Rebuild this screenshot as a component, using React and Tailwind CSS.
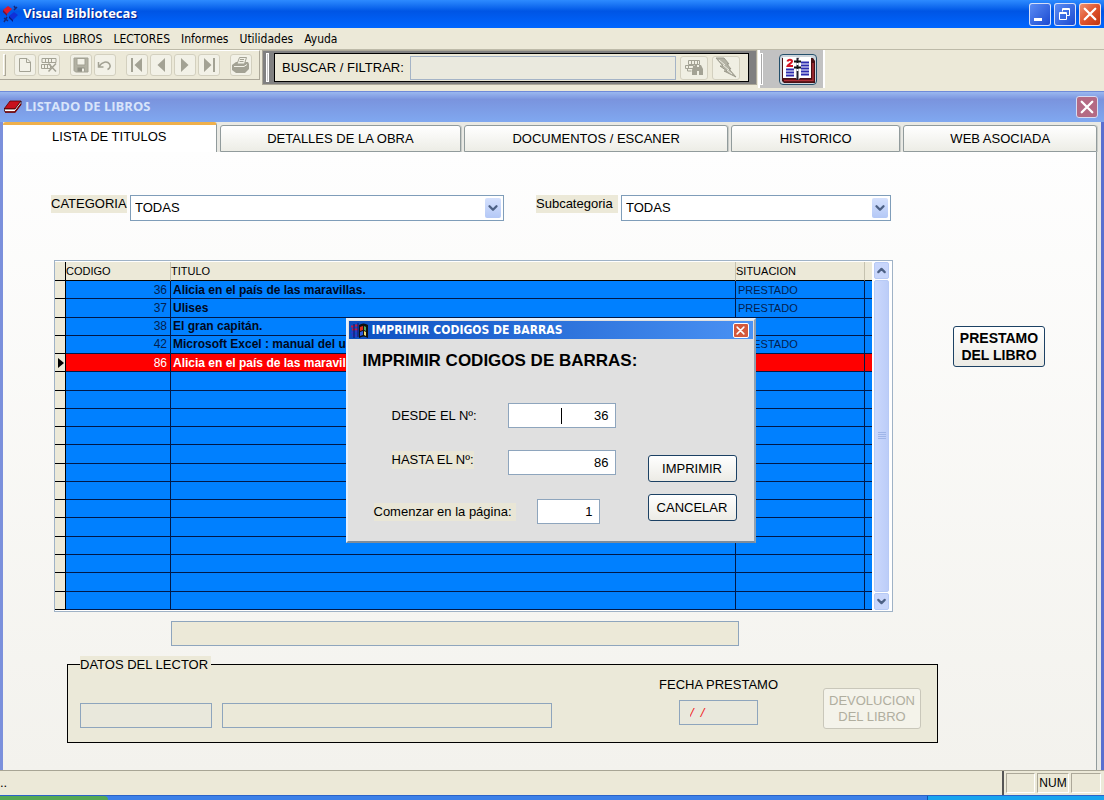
import { ChevronDown, ChevronUp } from 'lucide-react';

const MENUS = ['Archivos', 'LIBROS', 'LECTORES', 'Informes', 'Utilidades', 'Ayuda'];

const BOOKS = [
  { code: 36, title: 'Alicia en el país de las maravillas.', status: 'PRESTADO' },
  { code: 37, title: 'Ulises', status: 'PRESTADO' },
  { code: 38, title: 'El gran capitán.', status: '' },
  { code: 42, title: 'Microsoft Excel : manual del usuario', status: 'PRESTADO' },
  { code: 86, title: 'Alicia en el país de las maravillas.', status: '', selected: true },
];

const EMPTY_ROWS = Array.from({ length: 13 }, (_, i) => i);

const inputClass = 'h-[25px] border border-[#8ea5bd] px-1.5 outline-none';

function CloseGlyph({ size }) {
  return (
    <svg width={size} height={size} viewBox="0 0 12 12" stroke="#fff" strokeWidth="2" strokeLinecap="round">
      <path d="M1.5 1.5l9 9M10.5 1.5l-9 9" />
    </svg>
  );
}

function TitleBar() {
  return (
    <header className="flex h-7 items-center bg-gradient-to-b from-[#2d8bff] via-[#0055e5] via-40% to-[#0066ff] pl-[2px] pr-[3px]">
      <svg width="17" height="18" viewBox="0 0 17 18">
        <path d="M1 5l5-4 4 3-5 5z" fill="#e01828" />
        <path d="M1 5l4 4v2L1 7z" fill="#8c0a20" />
        <path d="M7 11l5-4 4 3-5 5z" fill="#1030d8" />
        <path d="M7 11l4 4v2l-4-4z" fill="#0a1880" />
        <path d="M12 1l2 3M15 2l-3 3M2 13l4 3M5 12l-3 5" stroke="#182878" strokeWidth="1.5" />
      </svg>
      <h1 className="ml-1 flex-1 font-['Open_Sans',sans-serif] text-[13px] font-bold text-white [text-shadow:1px_1px_1px_#0a1883]">
        Visual Bibliotecas
      </h1>
      <div className="flex gap-[3px]">
        <button aria-label="Minimizar" className="h-[23px] w-[22px] rounded-[3px] border border-white/80 bg-gradient-to-br from-[#5c8cf4] to-[#1c48d0]">
          <svg width="20" height="21" viewBox="0 0 20 21"><path d="M4 14h8v3H4z" fill="#fff" /></svg>
        </button>
        <button aria-label="Restaurar" className="h-[23px] w-[22px] rounded-[3px] border border-white/80 bg-gradient-to-br from-[#5c8cf4] to-[#1c48d0]">
          <svg width="20" height="21" viewBox="0 0 20 21" fill="none" stroke="#fff">
            <path d="M7.500 7.500V4.500h7v7h-3M7 5.500h8" />
            <path d="M4.500 8.500h7v7h-7zM4 9.500h8" />
          </svg>
        </button>
        <button aria-label="Cerrar" className="flex h-[23px] w-[22px] items-center justify-center rounded-[3px] border border-white/80 bg-gradient-to-br from-[#ee9070] via-[#e0532c] to-[#c0350f]">
          <CloseGlyph size={14} />
        </button>
      </div>
    </header>
  );
}

function ToolButton({ label, children }) {
  return (
    <button aria-label={label} className="flex h-[22px] w-[22px] items-center justify-center rounded-[3px] border border-[#d3d0bf] bg-[#f2f1e7]">
      <svg width="18" height="18" viewBox="0 0 18 18" fill="none" stroke="#a3a294">
        {children}
      </svg>
    </button>
  );
}

function Toolbar() {
  return (
    <div className="flex h-[42px] items-start border-t border-[#bdbaa8] bg-[#ece9d8]">
      <div className="flex h-[30px] w-[260px] items-center gap-[2px] border-y border-r border-b-[#aca899] border-r-[#aca899] border-t-white pl-[3px]">
        <span className="mr-[6px] h-[22px] w-[3px] border border-l-white border-t-white border-b-[#aca899] border-r-[#aca899]" />
        <ToolButton label="Nuevo"><path d="M3.500 2.500h7.500l3.500 3.500v9.500h-11zM10.500 2.500v4h4" /></ToolButton>
        <ToolButton label="Eliminar">
          <path d="M2 2.500h14v4H2zM5.500 2v5M8.500 2v5M11.500 2v5M1.500 8.500h9v4h-9zM4.500 8v5M7.500 8v5" />
          <path d="M8.500 7.500l7.500 8M16 7.500l-7.500 8" strokeWidth="1.500" />
        </ToolButton>
        <span className="w-[6px]" />
        <ToolButton label="Guardar">
          <path d="M2 2h14v14H3.500L2 14.500z" fill="#b2b1a3" />
          <path d="M5 2.500h8v6.500H5z" fill="#f2f1e7" />
          <path d="M5.500 11.500h7v4h-7z" fill="#8f8e82" stroke="none" />
          <path d="M10 12.500h2v3h-2z" fill="#f2f1e7" stroke="none" />
        </ToolButton>
        <ToolButton label="Deshacer"><path d="M2.500 6v5h5M3 10.500C6 6 11 4.500 13.500 8c1.500 2.500 0 4.500-2 5.500" strokeWidth="1.500" /></ToolButton>
        <span className="w-[6px]" />
        <ToolButton label="Primero"><path d="M3 2h2v14H3zM14 2v14L6.500 9z" fill="#a3a294" stroke="none" /></ToolButton>
        <ToolButton label="Anterior"><path d="M13 2v14L5.500 9z" fill="#a3a294" stroke="none" /></ToolButton>
        <ToolButton label="Siguiente"><path d="M5 2v14L12.500 9z" fill="#a3a294" stroke="none" /></ToolButton>
        <ToolButton label="Último"><path d="M13 2h2v14h-2zM4 2v14L11.500 9z" fill="#a3a294" stroke="none" /></ToolButton>
        <span className="w-[6px]" />
        <ToolButton label="Imprimir">
          <path d="M0 9l4-3h12l1 2v5l-4 4H4l-4-3z" fill="#a3a294" stroke="none" />
          <path d="M5 8l2.500-6.500h7L12.500 8z" fill="#f2f1e7" />
          <path d="M8 3.500h4M7.500 5.500h4" />
          <path d="M2 10.500h10l3-2" stroke="#f2f1e7" />
        </ToolButton>
      </div>

      <div className="ml-[2px] flex h-[35px] w-[495px] border border-[#aca899] bg-[#808080] py-[2px] pl-[3px] pr-[7px]">
        <span className="mr-[5px] w-[3px] border border-white bg-[#c8c8c8]" />
        <div className="flex flex-1 items-center border border-black bg-[#ece9d8] pl-[7px] pr-2">
          <label htmlFor="buscar" className="mr-[6px] whitespace-nowrap">BUSCAR / FILTRAR:</label>
          <input id="buscar" className="h-6 min-w-0 flex-1 border border-[#a4b3c6] bg-[#eae9de] px-1 outline-none" />
          <button aria-label="Buscar" className="ml-1 flex h-6 w-[28px] items-center justify-center rounded-[3px] border border-[#d3d0bf] bg-[#f0efe3]">
            <svg width="20" height="19" viewBox="0 0 20 19" fill="none" stroke="#a3a294">
              <path d="M4.500 2.500h11v4h-11zM7.500 2v5M10.500 2v5M13.500 2v5M1.500 7.500h8v3h-8zM4.500 7v4M3.500 11v2h4" />
              <path d="M9 9l2-2h2v2h2V7h2l2 4v6h-4v-4h-2v4H8v-5z" fill="#a3a294" stroke="none" />
            </svg>
          </button>
          <button aria-label="Filtrar" className="ml-1 flex h-6 w-[28px] items-center justify-center rounded-[3px] border border-[#d3d0bf] bg-[#f0efe3]">
            <svg width="22" height="22" viewBox="0 0 22 22" fill="#b4b3a5" stroke="#9b9a8c">
              <path d="M1 1h8l5 6h-2l4 5h-2l7 8-12-6h3L5 9h3z" />
              <path d="M4 3l6 5M8 8l6 5M12 13l5 4" stroke="#eeede2" />
            </svg>
          </button>
        </div>
      </div>

      <div className="ml-px flex h-[38px] w-[67px] items-center border-x-2 border-white bg-[#c2c2c2]">
        <span className="h-8 w-[3px] border border-white bg-[#aaa]" />
        <button aria-label="Agenda" className="ml-4 h-[31px] w-[38px] overflow-hidden rounded-[4px] border border-[#24506c] bg-[#ccd4dc]">
          <svg width="36" height="29" viewBox="0 0 36 29">
            <path d="M2 3h31l2 3v22H4l-2-2z" fill="#4a1014" />
            <path d="M4 25.500h29V8" fill="none" stroke="#b03038" strokeWidth="1.500" />
            <path d="M3 2h13l2 2 2-2h11v21H20l-2 2-2-2H3z" fill="#fff" />
            <path d="M17.500 3v22" stroke="#202030" strokeWidth="2" />
            <path d="M14 6.500h7M14 12.500h7" stroke="#111" strokeWidth="2" />
            <path d="M17.500 8v2M17.500 14v2" stroke="#fff" strokeWidth="2" />
            <path d="M6 14.500h8M6 17.500h8M6 20.500h8M21 7.500h8M21 10.500h8M21 13.500h8M21 16.500h8M21 19.500h8" stroke="#2c2cae" strokeWidth="2" />
            <path d="M7.500 6.500C8 4 12 4 12 6.500 12 8.500 8 9 7.500 11H13" fill="none" stroke="#d51423" strokeWidth="2" />
          </svg>
        </button>
      </div>
    </div>
  );
}

function Tab({ children }) {
  return (
    <button role="tab" aria-selected="false" className="mt-[3px] rounded-t-[3px] border border-[#919b9c] bg-gradient-to-b from-white to-[#edede6] shadow-[1px_0_0_#c9ccc8]">
      {children}
    </button>
  );
}

function Combo({ id, label, labelClass, className }) {
  return (
    <div className="flex items-start gap-[3px]">
      <label htmlFor={id} className={`h-[18px] whitespace-nowrap bg-[#ece9d8] leading-[18px] ${labelClass}`}>{label}</label>
      <div className={`relative ${className}`}>
        <select id={id} className="h-[26px] w-full appearance-none border border-[#7f9db9] bg-white px-1 outline-none">
          <option>TODAS</option>
        </select>
        <span className="pointer-events-none absolute right-[3px] top-[3px] flex h-5 w-4 items-center justify-center rounded-[2px] bg-gradient-to-b from-[#d5e1fd] to-[#b4c8f6] text-[#4d6185]">
          <ChevronDown size={14} strokeWidth={4} />
        </span>
      </div>
    </div>
  );
}

function BookTable() {
  return (
    <div className="ml-[3px] flex border border-[#9fb2c6] bg-white py-px text-[11px] leading-[14px]">
      <table className="h-[348px] min-w-0 flex-1 table-fixed border-separate border-spacing-0">
        <colgroup>
          <col className="w-[11px]" />
          <col className="w-[105px]" />
          <col />
          <col className="w-[129px]" />
          <col className="w-[7px]" />
        </colgroup>
        <thead>
          <tr className="h-[19px] bg-[#ece9d8] text-left">
            <th className="border-b border-r border-black p-0" />
            <th className="border-b border-r border-b-black border-r-[#c5c2b0] p-0 font-normal">CODIGO</th>
            <th className="border-b border-r border-b-black border-r-[#c5c2b0] p-0 font-normal">TITULO</th>
            <th className="border-b border-r border-b-black border-r-[#c5c2b0] p-0 font-normal">SITUACION</th>
            <th className="border-b border-black p-0" />
          </tr>
        </thead>
        <tbody>
          {BOOKS.map((book) => (
            <tr key={book.code} className={`h-[18px] ${book.selected ? 'bg-[#ff0000] text-white' : 'bg-[#0080ff] text-[#04204f]'}`}>
              <td className="border-b border-r border-black bg-[#ece9d8] p-0">
                {book.selected && (
                  <svg width="7" height="10" viewBox="0 0 7 10" className="ml-[3px]"><path d="M0 0l6 5-6 5z" /></svg>
                )}
              </td>
              <td className="border-b border-r border-[#001848] py-0 pl-0 pr-[3px] text-right text-[12px]">{book.code}</td>
              <td className={`overflow-hidden whitespace-nowrap border-b border-r border-[#001848] py-0 pl-[2px] pr-0 text-[12px] font-bold ${book.selected ? 'text-white' : 'text-[#000820]'}`}>
                {book.title}
              </td>
              <td className="border-b border-r border-[#001848] py-0 pl-[2px] pr-0">{book.status}</td>
              <td className="border-b border-[#001848] p-0" />
            </tr>
          ))}
          {EMPTY_ROWS.map((i) => (
            <tr key={i} className="h-[18px] bg-[#0080ff]">
              <td className="border-b border-r border-black bg-[#ece9d8] p-0" />
              <td className="border-b border-r border-[#001848] p-0" />
              <td className="border-b border-r border-[#001848] p-0" />
              <td className="border-b border-r border-[#001848] p-0" />
              <td className="border-b border-[#001848] p-0" />
            </tr>
          ))}
        </tbody>
      </table>

      <div className="mr-[3px] flex w-[17px] flex-col pl-[2px]">
        <button aria-label="Subir" className="flex h-[17px] items-center justify-center rounded-[2px] border border-[#b7caf5] bg-[#c8d6fb] text-[#4d6185]">
          <ChevronUp size={13} strokeWidth={4} />
        </button>
        <div className="my-px flex flex-1 items-center justify-center rounded-[2px] border border-[#b7caf5] bg-gradient-to-r from-[#cbd8fc] to-[#bccdf8]">
          <svg width="8" height="8" viewBox="0 0 8 8" stroke="#9fb5e8"><path d="M0 .5h8M0 2.500h8M0 4.500h8M0 6.500h8" /></svg>
        </div>
        <button aria-label="Bajar" className="flex h-[17px] items-center justify-center rounded-[2px] border border-[#b7caf5] bg-[#c8d6fb] text-[#4d6185]">
          <ChevronDown size={13} strokeWidth={4} />
        </button>
      </div>
    </div>
  );
}

function ReaderData() {
  return (
    <fieldset className="ml-16 mr-[158px] mt-[10px] border border-black bg-[#ebe9d9] pb-[13px] pl-3 pr-4">
      <legend className="h-[17px] bg-[#ece9d8] pr-[3px] leading-[17px]">DATOS DEL LECTOR</legend>
      <div className="flex items-start">
        <input aria-label="Código del lector" className={`${inputClass} mt-[30px] w-[132px] bg-[#e9e8dc]`} />
        <input aria-label="Nombre del lector" className={`${inputClass} ml-[10px] mr-[107px] mt-[30px] min-w-0 flex-1 bg-[#ebe9d9]`} />
        <div className="mt-1 flex flex-col items-center">
          <label htmlFor="fecha" className="mb-[7px] h-4 whitespace-nowrap leading-4">FECHA PRESTAMO</label>
          <input id="fecha" defaultValue="/  /" className={`${inputClass} w-[79px] bg-[#e9e8dc] pl-[10px] italic text-[#f02020]`} />
        </div>
        <button disabled className="ml-[45px] mt-[15px] h-[41px] w-[98px] rounded-[3px] border border-[#c9c7ba] bg-[#f4f3ea] leading-4 text-[#b0ae9f]">
          DEVOLUCION DEL LIBRO
        </button>
      </div>
    </fieldset>
  );
}

function PrintDialog() {
  return (
    <div role="dialog" aria-labelledby="dialog-title" className="w-[410px] border-2 border-b-[#7c8c9c] border-l-[#e6f0fc] border-r-[#90a0b0] border-t-[#e6f0fc] bg-[#e0e0e0] p-px">
      <div className="flex h-[18px] items-center bg-gradient-to-r from-[#0a4fc0] to-[#4a92f4] pl-px pr-1">
        <svg width="20" height="17" viewBox="0 0 20 17">
          <path d="M9 3c3-2 6-2 9 0v13c-3-2-6-2-9 0z" fill="#101010" />
          <path d="M10 5l3-1v4l-3 1z" fill="#e03020" />
          <path d="M14 4l2 1v4l-2-1z" fill="#50b060" />
          <path d="M10 10l3-1v4l-3 1z" fill="#3060e0" />
          <path d="M14 9l2 1v4l-2-1z" fill="#f0e070" />
          <path d="M1 4.500h3M5 3.500h3M2 7.500h6" stroke="#c01848" strokeWidth="2" />
          <path d="M1 10.500h3M5 9.500h3M2 13.500h6" stroke="#3038c8" strokeWidth="2" />
          <path d="M4 2v14M8 1v14" stroke="#101060" />
        </svg>
        <h2 id="dialog-title" className="ml-[2px] flex-1 font-['DejaVu_Sans_Condensed','DejaVu_Sans',sans-serif] text-[12px] font-bold leading-[18px] text-white">
          IMPRIMIR CODIGOS DE BARRAS
        </h2>
        <button aria-label="Cerrar diálogo" className="flex h-[15px] w-4 items-center justify-center rounded-[2px] border border-white bg-[#d4593c]">
          <CloseGlyph size={9} />
        </button>
      </div>

      <div className="flex items-end justify-between pb-4 pl-[14px] pr-4 pt-3">
        <form className="flex flex-col">
          <h3 className="h-5 whitespace-nowrap text-[17px] font-bold leading-5">IMPRIMIR CODIGOS DE BARRAS:</h3>
          <div className="mt-8 flex">
            <div className="w-[145px] pl-[29px] leading-[25px]"><label htmlFor="desde">DESDE EL Nº:</label></div>
            <div className="relative">
              <input id="desde" defaultValue="36" className={`${inputClass} w-[108px] bg-white text-right`} />
              <span className="absolute left-[53px] top-[5px] h-4 w-px bg-black" />
            </div>
          </div>
          <div className="mt-[22px] flex">
            <div className="w-[145px] pl-[29px]"><label htmlFor="hasta" className="inline-block h-[18px] bg-[#e9e6d6] leading-[18px]">HASTA EL Nº:</label></div>
            <input id="hasta" defaultValue="86" className={`${inputClass} w-[108px] bg-white text-right`} />
          </div>
          <div className="mt-6 flex items-center">
            <div className="w-[174px] pl-[11px]"><label htmlFor="pagina" className="inline-block h-[18px] bg-[#e9e6d6] pr-1 leading-[18px]">Comenzar en la página:</label></div>
            <input id="pagina" defaultValue="1" className={`${inputClass} w-[63px] bg-white text-right`} />
          </div>
        </form>
        <div className="flex flex-col gap-3 pb-[3px]">
          <button className="h-[27px] w-[89px] rounded-[3px] border border-[#1c4164] bg-gradient-to-b from-white to-[#ecebe5]">IMPRIMIR</button>
          <button className="h-[27px] w-[89px] rounded-[3px] border border-[#1c4164] bg-gradient-to-b from-white to-[#ecebe5]">CANCELAR</button>
        </div>
      </div>
    </div>
  );
}

function BooksWindow() {
  return (
    <main className="relative flex flex-1 flex-col border-r-[3px] border-[#5a6fd0] bg-[#e9e9e4]">
      <div className="-mr-[3px] flex h-[31px] items-center border-t border-[#6f8bd8] bg-gradient-to-b from-[#9ab8f0] via-[#7a94de] via-25% to-[#80a8f0] pl-1 pr-[6px]">
        <svg width="18" height="14" viewBox="0 0 18 14">
          <path d="M6 1h11l-6 8H0z" fill="#c8101c" stroke="#500" strokeWidth=".8" />
          <path d="M0 9h11l6-8v3l-6 8H1z" fill="#fff" stroke="#300" strokeWidth=".8" />
          <path d="M1 12h10l6-8" fill="none" stroke="#700" strokeWidth="1.500" />
        </svg>
        <h2 className="ml-[3px] flex-1 font-['Open_Sans',sans-serif] text-[13px] font-bold text-[#d8e4fa]">LISTADO DE LIBROS</h2>
        <button aria-label="Cerrar ventana" className="flex h-[22px] w-[22px] items-center justify-center rounded-[3px] border border-[#d6dcf2] bg-[#b46a84]">
          <CloseGlyph size={14} />
        </button>
      </div>

      <div className="mr-1 flex flex-1 flex-col border-l-[3px] border-[#7b90dc]">
        <div role="tablist" className="grid h-[30px] grid-cols-[213fr_241fr_263fr_169fr_193fr] gap-[3px]">
          <button role="tab" aria-selected="true" className="rounded-t-[3px] border-r border-t-[3px] border-r-[#919b9c] border-t-[#efb04c] bg-white pb-1">
            LISTA DE TITULOS
          </button>
          <Tab>DETALLES DE LA OBRA</Tab>
          <Tab>DOCUMENTOS / ESCANER</Tab>
          <Tab>HISTORICO</Tab>
          <Tab>WEB ASOCIADA</Tab>
        </div>

        <div className="flex-1 border-r border-[#919b9c] bg-gradient-to-b from-[#fefefe] to-[#f3f2ed] pb-[27px] pt-[43px]">
          <div className="flex items-start gap-[60px] pl-12 pr-[51px]">
            <div className="min-w-0 flex-1">
              <div className="flex justify-between pr-[2px]">
                <Combo id="categoria" label="CATEGORIA" labelClass="w-[76px]" className="w-[374px]" />
                <Combo id="subcategoria" label="Subcategoria" labelClass="w-[82px]" className="w-[270px]" />
              </div>
              <div className="mt-[39px]">
                <BookTable />
              </div>
              <input aria-label="Título" className={`${inputClass} ml-[120px] mt-[9px] block w-[568px] bg-[#ece9d8]`} />
            </div>
            <button className="mt-[131px] h-[41px] w-[92px] rounded-[3px] border border-[#1c4164] bg-gradient-to-b from-white to-[#ecebe5] text-[14px] font-bold leading-[17px]">
              PRESTAMO DEL LIBRO
            </button>
          </div>
          <ReaderData />
        </div>
      </div>

      <div className="absolute inset-0 flex items-center justify-center">
        <PrintDialog />
      </div>
    </main>
  );
}

function StatusBar() {
  return (
    <footer>
      <div className="flex h-[25px] border-t border-[#a8a595] bg-[#ece9d8]">
        <span className="flex-1 border-r-2 border-[#555] leading-6">..</span>
        <div className="flex gap-[2px] py-[2px] pl-[2px] pr-[3px]">
          <span className="w-[29px] border border-b-white border-l-[#aca899] border-r-white border-t-[#aca899]" />
          <span className="w-8 border border-b-white border-l-[#aca899] border-r-white border-t-[#aca899] text-center text-[12px] leading-[19px]">NUM</span>
          <span className="w-[30px] border border-b-white border-l-[#aca899] border-r-white border-t-[#aca899]" />
        </div>
      </div>
      {/* top edge of the Windows taskbar */}
      <div className="flex h-[5px] border-t border-[#2a62c8] bg-[#3c80e8]">
        <span className="w-[108px] rounded-tr-[4px] bg-[#55a855]" />
        <span className="flex-1" />
        <span className="w-[177px] border-l border-[#0c58b0] bg-[#18a4ee]" />
      </div>
    </footer>
  );
}

export default function App() {
  return (
    <div className="flex min-h-screen flex-col bg-[#ece9d8] font-['Liberation_Sans',Arial,sans-serif] text-[13px] text-black">
      <TitleBar />
      <nav className="flex h-[21px] items-center gap-[11px] pl-[6px] font-['DejaVu_Sans_Condensed','DejaVu_Sans',sans-serif] text-[12px]">
        {MENUS.map((name) => (
          <button key={name}>{name}</button>
        ))}
      </nav>
      <Toolbar />
      <BooksWindow />
      <StatusBar />
    </div>
  );
}
